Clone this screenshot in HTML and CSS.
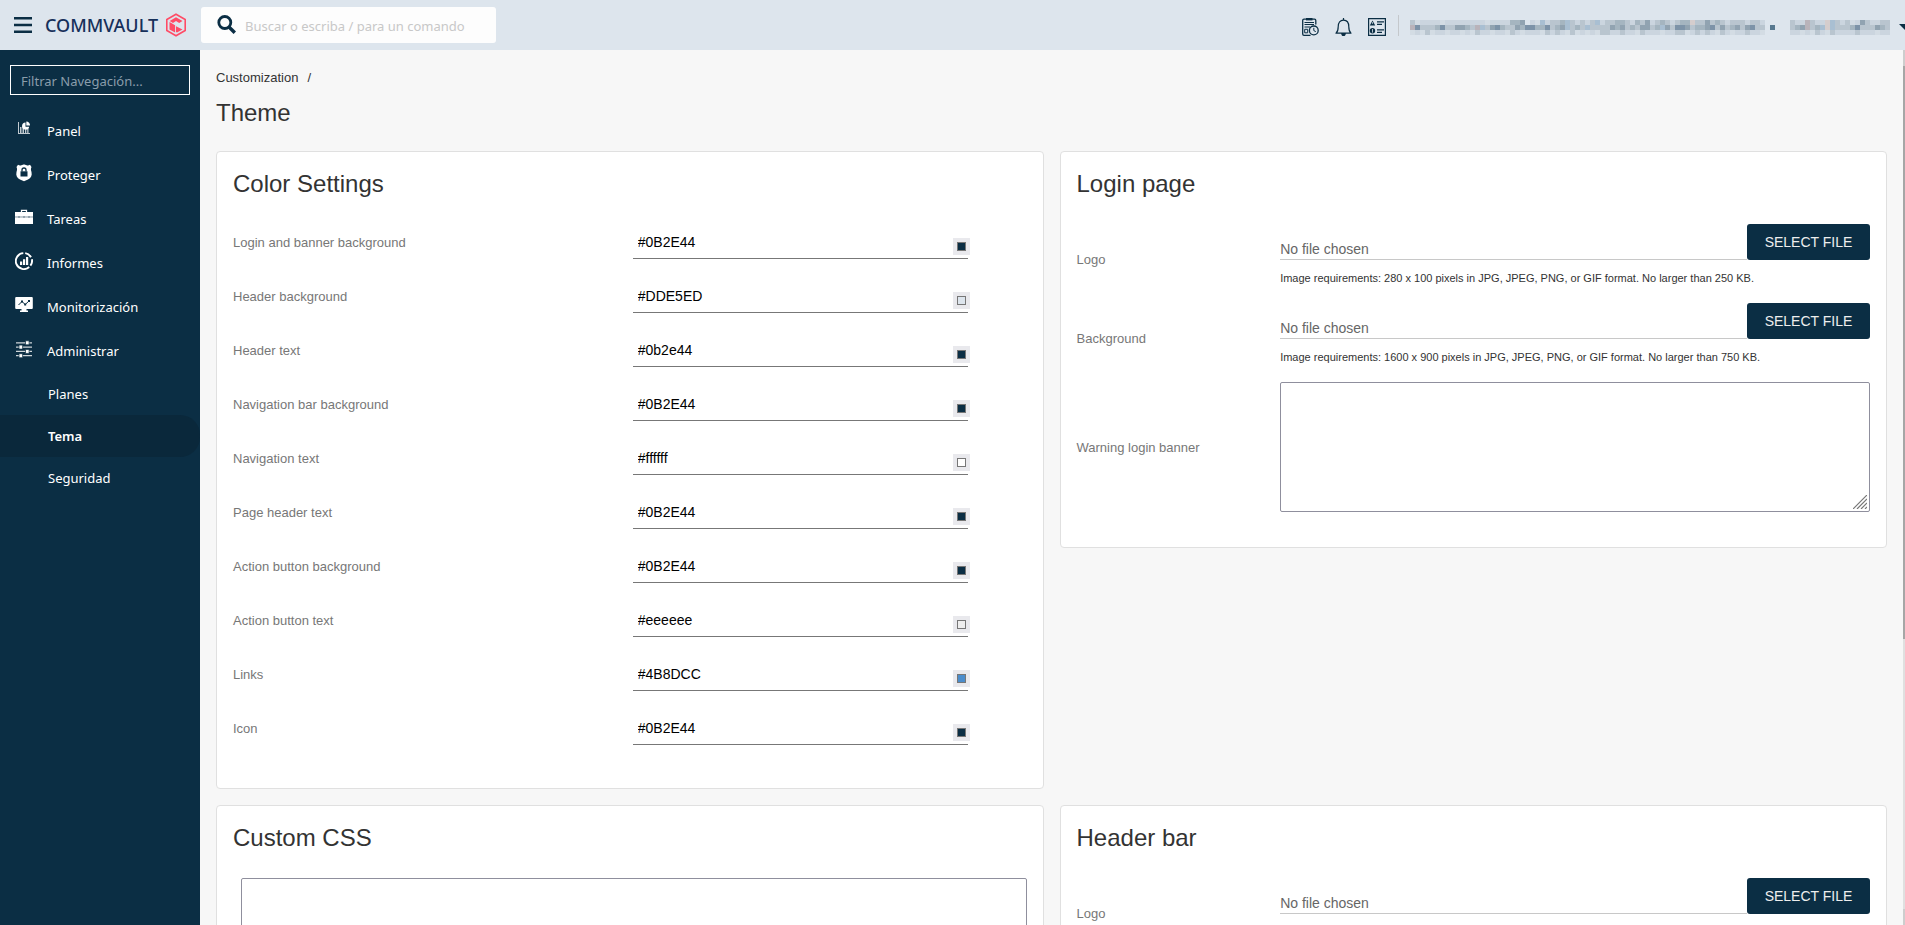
FILE: index.html
```html
<!DOCTYPE html>
<html lang="es">
<head>
<meta charset="utf-8">
<title>Theme</title>
<link rel="stylesheet" href="styles.css">
</head>
<body>
<header class="topbar">
  <button class="icon-btn menu-btn" type="button" aria-label="Menu">
    <svg width="18" height="16" viewBox="0 0 18 16" fill="#0b2e44"><path d="M0 0h18v2.600H0zM0 6.700h18v2.600H0zM0 13.400h18V16H0z"/></svg>
  </button>
  <a class="brand" href="#"><span>COMMVAULT</span>
    <svg width="22" height="24" viewBox="0 0 22 24"><path d="M11 1.200 20.200 6.500v11L11 22.800 1.800 17.500v-11z" fill="none" stroke="#ff4b66" stroke-width="1.600"/><path fill="#ff4b66" d="M11 4.200 17.500 8l-3.300 1.900-3.200-1.800-3 1.800L4.700 8zM4.500 9l5.600 3.200v7.400l-5.600-3.200zM11 13.200l6.500 3.300-5.500 3.100-1-.6z"/></svg>
  </a>
  <div class="search">
    <svg width="19" height="19" viewBox="0 0 19 19" fill="none" stroke="#0b2e44"><circle cx="7.800" cy="7.500" r="6" stroke-width="2.800"/><path d="m12 12 5.800 5.800" stroke-width="3.400"/></svg>
    <input type="text" aria-label="Buscar" placeholder="Buscar o escriba / para un comando">
  </div>
  <div class="tools">
    <button class="icon-btn" type="button" aria-label="Jobs">
      <svg width="17" height="18" viewBox="0 0 17 18" fill="none" stroke="#0b2e44"><path d="M8.500 17.300H2A1.300 1.300 0 0 1 .7 16V2.500A1.300 1.300 0 0 1 2 1.200h10.500a1.300 1.300 0 0 1 1.300 1.300v4" stroke-width="1.300"/><path d="M4 1.200h6.500" stroke-width="2.400"/><path d="M2.500 4.500H12M2.500 6.500H12M2.500 9H8" stroke-width="1.100"/><path d="M2.700 11.300h3v3.500h-3z"/><circle cx="11.800" cy="12.400" r="4.400" stroke-width="1.300"/><path d="M11.800 9.800v2.800l2 1"/></svg>
    </button>
    <button class="icon-btn" type="button" aria-label="Alerts">
      <svg width="17" height="18" viewBox="0 0 17 18" fill="none" stroke="#0b2e44" stroke-width="1.200"><path d="M1 15.200c2-1.700 2.200-3.200 2.200-6.500 0-4 2-6.600 5.300-6.600s5.300 2.600 5.300 6.600c0 3.300.2 4.800 2.200 6.500z" stroke-linejoin="round"/><path d="M8.500 0v2"/><path d="M6.800 15.600h3.400c0 1.300-.6 2-1.700 2s-1.700-.7-1.700-2z" fill="#0b2e44"/></svg>
    </button>
    <button class="icon-btn" type="button" aria-label="Events">
      <svg width="18" height="18" viewBox="0 0 18 18" fill="#0b2e44"><path fill="none" stroke="#0b2e44" stroke-width="1.200" d="M.6.600h16.800v16.800H.6z"/><path d="M4.500 2.500 7.200 7.500H1.800z"/><circle cx="4.500" cy="12.800" r="2.700"/><path d="M9 3.300h7v1.200H9zM9 5.800h5V7H9zM9 11.300h7v1.200H9zM9 13.800h5V15H9z"/><path stroke="#dde5ed" stroke-width=".8" d="M4.500 4.200v1.600M4.500 11v3.600"/></svg>
    </button>
    <span class="divider"></span>
    <svg class="mosaic" id="account" height="15" aria-label="Account"></svg>
    <svg class="mosaic" id="user" height="15" aria-label="User"></svg>
    <span class="caret"></span>
  </div>
</header>
<div class="shell">
  <nav class="sidebar">
    <input class="nav-filter" type="text" aria-label="Filtrar" placeholder="Filtrar Navegación...">
    <a class="nav-item" href="#"><svg width="18" height="18" viewBox="0 0 18 18" fill="#fff"><path opacity=".75" d="M3 2h1v12H3zM5 7h1.500v6H5zM7.500 6H9v7H7.500zM10 9.500h1.300V13H10zM12.200 8.500h1.300V13h-1.300zM3 13h12v1H3z"/><path d="M10.500 2.500a3.600 3.600 0 1 0 3.700 4.200h-3.700z"/><path d="M11.300 1.500A3.800 3.800 0 0 1 15 5.600h-3.700z"/></svg>Panel</a>
    <a class="nav-item" href="#"><svg width="18" height="18" viewBox="0 0 18 18"><path fill="#fff" d="M3 .8c1.300.9 2.300.9 3.300.5C7.500.6 8.300.4 9 .4s1.500.2 2.700.9c1 .4 2 .4 3.300-.5L16.500 3c-.8 1.500-.7 3 0 5 .8 3.500-.5 6-3.500 7.500L9 17.300l-4-1.800C2 14 .700 11.500 1.500 8c.7-2 .8-3.500 0-5z"/><path fill="#0b2e44" d="M5.500 7.300h7V12.500h-7z"/><path fill="none" stroke="#0b2e44" stroke-width="1.300" d="M7 7.500V6a2 2 0 0 1 4 0v1.500"/></svg>Proteger</a>
    <a class="nav-item" href="#"><svg width="18" height="18" viewBox="0 0 18 18" fill="#fff"><path d="M0 4h18v4.200H0zM0 9.500h18V16H0z"/><path opacity=".65" d="M0 8h18v1.800H0z"/><path fill="none" stroke="#fff" stroke-width="1.300" d="M6.500 4V2.300h5V4"/><path fill="#0b2e44" d="M3.500 8.500h1v1h-1zM8.500 8.500h1v1h-1zM13.500 8.500h1v1h-1z"/></svg>Tareas</a>
    <a class="nav-item" href="#"><svg width="18" height="18" viewBox="0 0 18 18" fill="#fff"><path fill="none" stroke="#fff" stroke-width="1.900" d="M10.200 1.100A8 8 0 0 1 16 5.300M16.900 7.200a8 8 0 0 1-1.500 6.500M14.200 15A8 8 0 1 1 8.300 1.100"/><path d="M5 9.500h2.200V13H5zM8 7.200h2.200V13H8zM11 5h2.200v8H11z"/></svg>Informes</a>
    <a class="nav-item" href="#"><svg width="18" height="18" viewBox="0 0 18 18" fill="#fff"><path d="M1.200 1h15.600a1 1 0 0 1 1 1v10a1 1 0 0 1-1 1H11.500v1.500H13V16H5v-1.500h1.500V13H1.200a1 1 0 0 1-1-1V2a1 1 0 0 1 1-1z"/><path fill="none" stroke="#0b2e44" d="m3.500 9 3.500-3.500 3.200 3L14 5"/><path fill="#0b2e44" d="M6 4.500h2v2H6zM9.200 7.500h2v2h-2zM13 4h2v2h-2z"/></svg>Monitorización</a>
    <a class="nav-item" href="#"><svg width="18" height="18" viewBox="0 0 18 18" fill="#fff"><path opacity=".8" d="M1 2.200h16v1.200H1zM1 6.500h16v1.200H1zM1 10.800h16V12H1zM1 15.100h16v1.200H1z"/><path stroke="#0b2e44" stroke-width=".7" d="M10.500.8h3.600v4h-3.600zM4 5.100h3.600v4H4zM10.500 9.400h3.600v4h-3.600zM4 13.700h3.600v4H4z"/></svg>Administrar</a>
    <a class="sub-item" href="#">Planes</a>
    <a class="sub-item active" href="#">Tema</a>
    <a class="sub-item" href="#">Seguridad</a>
  </nav>
  <main class="content">
    <div class="breadcrumb"><a href="#">Customization</a><span>/</span></div>
    <h1>Theme</h1>
    <div class="cards">
      <section class="card">
        <h2>Color Settings</h2>
        <div class="color-row"><label for="c0">Login and banner background</label><div class="color-field"><input id="c0" type="text" value="#0B2E44"><button type="button" class="swatch" aria-label="Pick"><i style="background:#0B2E44"></i></button></div></div>
        <div class="color-row"><label for="c1">Header background</label><div class="color-field"><input id="c1" type="text" value="#DDE5ED"><button type="button" class="swatch" aria-label="Pick"><i style="background:#DDE5ED"></i></button></div></div>
        <div class="color-row"><label for="c2">Header text</label><div class="color-field"><input id="c2" type="text" value="#0b2e44"><button type="button" class="swatch" aria-label="Pick"><i style="background:#0b2e44"></i></button></div></div>
        <div class="color-row"><label for="c3">Navigation bar background</label><div class="color-field"><input id="c3" type="text" value="#0B2E44"><button type="button" class="swatch" aria-label="Pick"><i style="background:#0B2E44"></i></button></div></div>
        <div class="color-row"><label for="c4">Navigation text</label><div class="color-field"><input id="c4" type="text" value="#ffffff"><button type="button" class="swatch" aria-label="Pick"><i style="background:#ffffff"></i></button></div></div>
        <div class="color-row"><label for="c5">Page header text</label><div class="color-field"><input id="c5" type="text" value="#0B2E44"><button type="button" class="swatch" aria-label="Pick"><i style="background:#0B2E44"></i></button></div></div>
        <div class="color-row"><label for="c6">Action button background</label><div class="color-field"><input id="c6" type="text" value="#0B2E44"><button type="button" class="swatch" aria-label="Pick"><i style="background:#0B2E44"></i></button></div></div>
        <div class="color-row"><label for="c7">Action button text</label><div class="color-field"><input id="c7" type="text" value="#eeeeee"><button type="button" class="swatch" aria-label="Pick"><i style="background:#eeeeee"></i></button></div></div>
        <div class="color-row"><label for="c8">Links</label><div class="color-field"><input id="c8" type="text" value="#4B8DCC"><button type="button" class="swatch" aria-label="Pick"><i style="background:#4B8DCC"></i></button></div></div>
        <div class="color-row"><label for="c9">Icon</label><div class="color-field"><input id="c9" type="text" value="#0B2E44"><button type="button" class="swatch" aria-label="Pick"><i style="background:#0B2E44"></i></button></div></div>
      </section>
      <section class="card card-form">
        <h2>Login page</h2>
        <div class="form-row"><label for="f1">Logo</label><div><div class="file"><input id="f1" type="text" readonly value="No file chosen"><button type="button">SELECT FILE</button></div><p class="hint">Image requirements: 280 x 100 pixels in JPG, JPEG, PNG, or GIF format. No larger than 250 KB.</p></div></div>
        <div class="form-row"><label for="f2">Background</label><div><div class="file"><input id="f2" type="text" readonly value="No file chosen"><button type="button">SELECT FILE</button></div><p class="hint">Image requirements: 1600 x 900 pixels in JPG, JPEG, PNG, or GIF format. No larger than 750 KB.</p></div></div>
        <div class="form-row"><label for="f3">Warning login banner</label><div class="area"><textarea id="f3"></textarea><svg class="grip" width="14" height="14" viewBox="0 0 14 14" stroke="#777" stroke-width="1.200"><path d="M0 14 14 0M4 14 14 4M8 14l6-6M12 14l2-2"/></svg></div></div>
      </section>
      <section class="card">
        <h2>Custom CSS</h2>
        <textarea class="css-code" aria-label="Custom CSS"></textarea>
      </section>
      <section class="card card-form">
        <h2>Header bar</h2>
        <div class="form-row"><label for="f4">Logo</label><div><div class="file"><input id="f4" type="text" readonly value="No file chosen"><button type="button">SELECT FILE</button></div><p class="hint">&nbsp;</p></div></div>
      </section>
    </div>
  </main>
  <div class="scrollbar"><span class="cap"></span><span class="thumb"></span><span class="track"></span><span class="cap"></span></div>
</div>
<script src="mosaic.js"></script>
</body>
</html>
```

FILE: styles.css
```css
* { box-sizing: border-box; }
body {
  margin: 0;
  height: 100vh;
  display: flex;
  flex-direction: column;
  overflow: hidden;
  font-family: "Liberation Sans", Arial, sans-serif;
  font-size: 14px;
  color: #333;
  background: #f7f7f7;
}
a { color: inherit; text-decoration: none; }
svg { display: block; flex: none; }
input, textarea, button { font: inherit; outline: 0; }

.topbar {
  flex: none;
  height: 50px;
  display: flex;
  align-items: center;
  background: #dde5ed;
  overflow: hidden;
}
.icon-btn { border: 0; background: none; padding: 0; }
.menu-btn { margin: 0 13px 0 14px; }
.brand {
  display: flex;
  align-items: center;
  width: 156px;
  justify-content: space-between;
  padding-right: 14px;
  font: 500 18px/24px "Noto Sans", sans-serif;
  color: #16305a;
}
.search {
  width: 295px;
  height: 36px;
  display: flex;
  align-items: center;
  gap: 9px;
  padding: 0 16px;
  background: #fdfdfd;
  border-radius: 3px;
}
.search input {
  flex: 1;
  min-width: 0;
  border: 0;
  padding: 2px 0 0;
  background: none;
  font: 13px "Noto Sans", sans-serif;
}
.search input::placeholder { color: #c8c8c8; }
.search svg { margin-bottom: 2px; }
.tools {
  flex: none;
  margin-left: auto;
  display: flex;
  align-items: center;
  gap: 16px;
}
.tools .icon-btn { margin-top: 4px; }
.divider { width: 1px; height: 21px; background: #c4c8cc; margin: 0 -5px 0 -4px; }
#account { margin-right: -1px; }
.mosaic { margin-top: 5px; }
.caret {
  margin: 3px -6px 0 -7px;
  border: solid transparent;
  border-width: 6px 6px 0;
  border-top-color: #0b2e44;
}

.shell { flex: 1; min-height: 0; display: flex; }
.sidebar {
  flex: none;
  width: 200px;
  padding-top: 15px;
  background: #0b2e44;
  color: #fff;
  font: 13px "Noto Sans", sans-serif;
}
.nav-filter {
  display: block;
  width: 180px;
  height: 30px;
  margin: 0 10px 14px;
  padding: 2px 10px 0;
  border: 1px solid #fff;
  border-radius: 0;
  background: none;
  color: #fff;
}
.nav-filter::placeholder { color: #8a9dab; }
.nav-item {
  height: 44px;
  display: flex;
  align-items: center;
  gap: 14px;
  padding-left: 15px;
}
.nav-item svg { margin-bottom: 4px; }
.sub-item { display: block; line-height: 42px; padding-left: 48px; }
.active { background: #0a283b; font-weight: 600; border-radius: 0 20px 20px 0; }

.content { flex: 1; min-width: 0; overflow: hidden; padding: 19px 16px 0; }
.breadcrumb { display: flex; gap: 9px; font-size: 13px; line-height: 18px; }
h1, h2 { margin: 0; font-size: 24px; line-height: 32px; font-weight: 400; }
h1 { margin: 10px 0 22px; }
.cards {
  display: grid;
  grid-template-columns: 1fr 1fr;
  gap: 16px;
  align-items: start;
}
.card {
  min-width: 0;
  padding: 16px 16px 24px;
  background: #fff;
  border: 1px solid #e0e0e0;
  border-radius: 4px;
}
.card-form { padding-bottom: 35px; }
h2 { margin-bottom: 24px; }
label { font-size: 13px; color: #777; }
.color-row {
  height: 54px;
  display: grid;
  grid-template-columns: 1fr 1fr;
  gap: 6px;
}
.color-row label { line-height: 37px; }
.color-field { position: relative; height: 35px; margin-right: 59px; }
.color-field input {
  width: 100%;
  height: 35px;
  padding: 1px 5px 0;
  border: 0;
  border-bottom: 1px solid #777;
  color: #000;
}
.swatch {
  position: absolute;
  right: -2px;
  bottom: 4px;
  width: 17px;
  height: 17px;
  padding: 4px;
  border: 0;
  background: #e9e9ed;
}
.swatch i { display: block; height: 9px; border: 1px solid #777; }

.form-row {
  display: grid;
  grid-template-columns: 1fr 3fr;
  gap: 7px;
  align-items: center;
  margin-bottom: 8px;
}
.form-row:last-child { margin-bottom: 0; }
.file { display: flex; height: 36px; }
.file input {
  flex: 1;
  min-width: 0;
  padding: 14px 0 0;
  border: 0;
  border-bottom: 1px solid #c8c8c8;
  color: #666;
}
.file button {
  width: 123px;
  border: 0;
  border-radius: 3px;
  background: #0b2e44;
  color: #eee;
}
.hint { margin: 0; padding-top: 9px; height: 35px; font-size: 11px; line-height: 18px; }
textarea {
  display: block;
  width: 100%;
  height: 130px;
  border: 1px solid #8f8f9d;
  border-radius: 2px;
  background: #fff;
  resize: none;
}
.area { position: relative; }
.grip { position: absolute; right: 3px; bottom: 3px; }
.css-code { width: calc(100% - 8px); margin-left: 8px; height: 200px; }

.scrollbar { flex: none; width: 2px; display: flex; flex-direction: column; }
.cap { height: 16px; background: #cdcdcd; }
.thumb { flex: 68; background: #a6a6a6; }
.track { flex: 32; background: #e0e0e0; }
```

FILE: mosaic.js
```javascript
// Obscured account names, drawn as rows of 5px tiles keyed by palette letter.
const palette = {
  b: '#cbd5df', c: '#b9c5cf', d: '#a5b5c0', e: '#91a3b1', f: '#7d93a8',
  g: '#a9bfd2', h: '#b9b3ba', i: '#57788f', j: '#d3dce4', p: '#d5cdcd'
};
const rows = {
  account: [
    'cjbbbbjbbbbbbbbjbbbbddeabjgbccdgcbcbcgbccddcbdcebcdcbcddpccecdcbcccbccb  ',
    'hfcccdfcceedchgcefdccedffddfcdegcdcgccccedecdceecdgecffecddefcecdecefcc i',
    'jbjcjbbjbbjbjcbbjbbjcbjbbbjcbcbjcjbjbjccbbcbbjcbbbjbbccjbcbcbjcbjbbcbbj  '
  ],
  user: ['cbbhcbbpgcbcjbecbbcc', 'cdehcdgpgcccdfcccedc', 'bbjbjcbjcbbbbcbbbjbb']
};
for (const [id, lines] of Object.entries(rows)) {
  const svg = document.getElementById(id);
  svg.setAttribute('width', lines[1].length * 5);
  lines.forEach((line, y) => [...line].forEach((key, x) => {
    if (!palette[key]) return;
    const tile = document.createElementNS('http://www.w3.org/2000/svg', 'rect');
    tile.setAttribute('x', x * 5);
    tile.setAttribute('y', y * 5);
    tile.setAttribute('width', 5);
    tile.setAttribute('height', 5);
    tile.setAttribute('fill', palette[key]);
    svg.append(tile);
  }));
}
```
